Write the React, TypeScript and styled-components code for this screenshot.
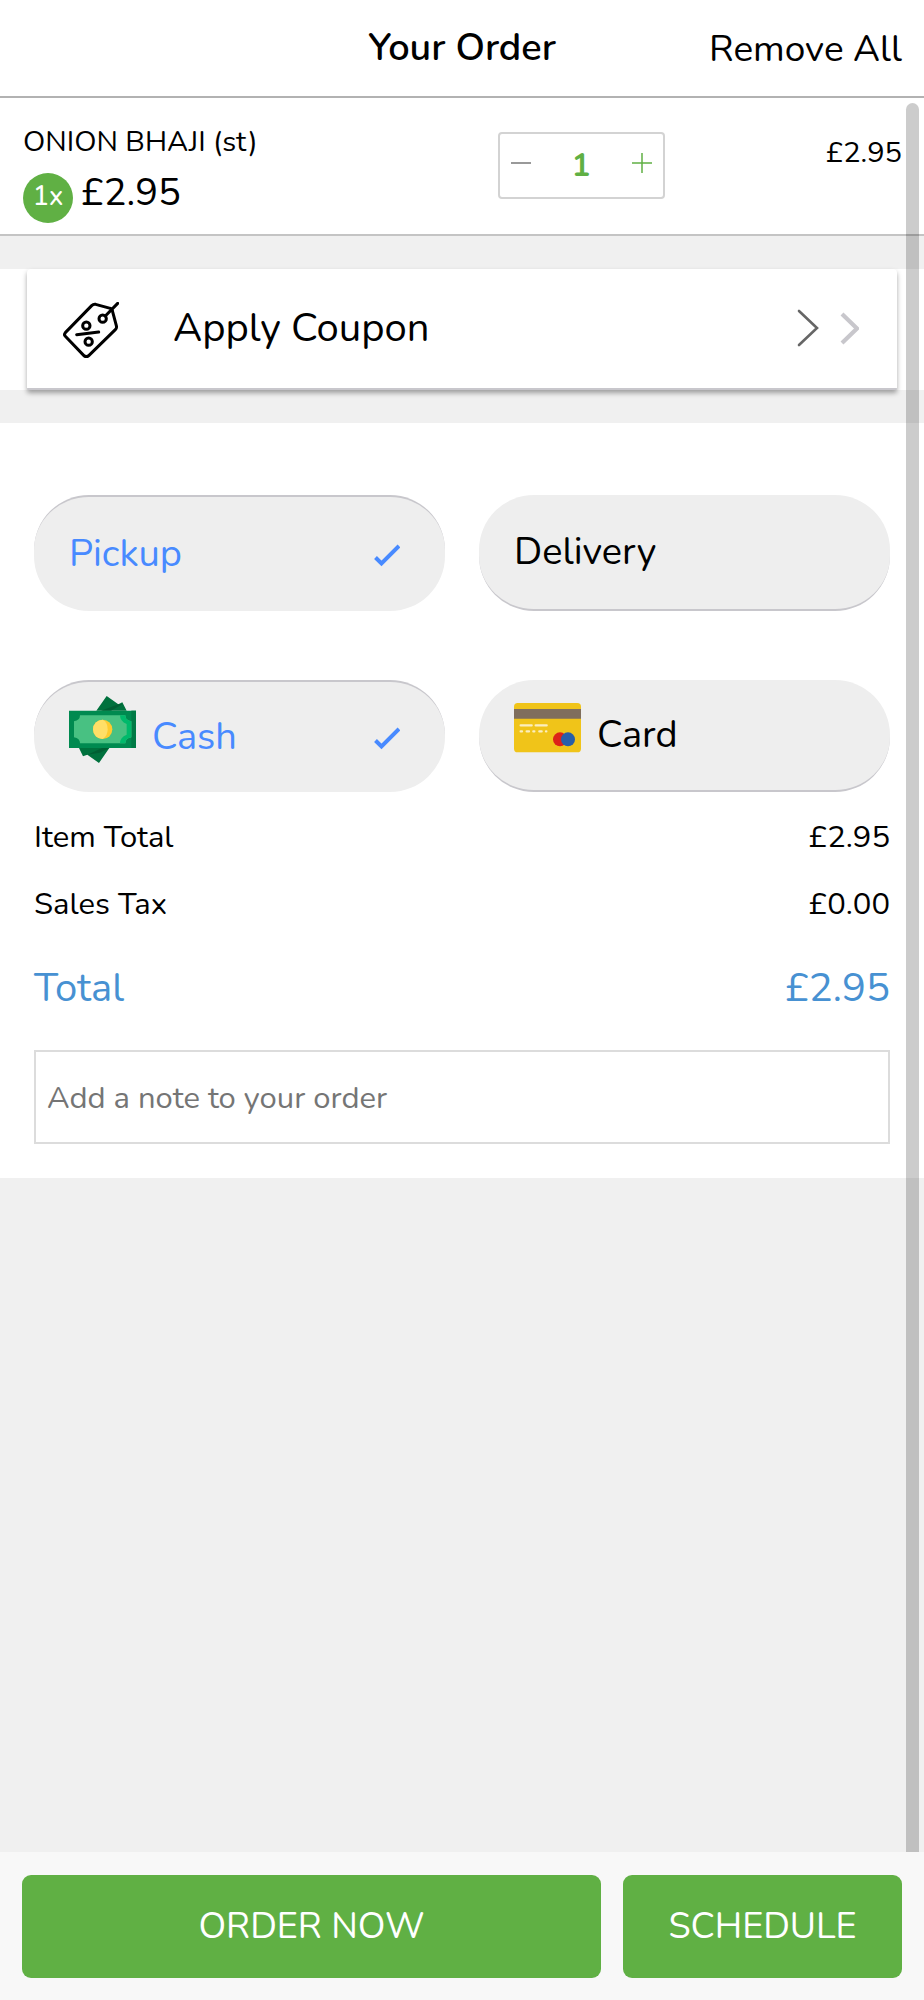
import React, { useState } from "react";
import styled, { createGlobalStyle } from "styled-components";

const GlobalStyle = createGlobalStyle`
  *, *::before, *::after { box-sizing: border-box; }
  body {
    margin: 0;
    background: #f0f0f0;
    color: #000;
    font-family: Nunito, Lato, "Open Sans", sans-serif;
    font-size: 29px;
  }
  button, input {
    font: inherit;
    color: inherit;
    margin: 0;
  }
`;

const green = "#60b044";
const blue = "#488aff";

const Page = styled.div`
  position: relative;
  display: flex;
  flex-direction: column;
  min-height: 100vh;
`;

const Header = styled.header`
  display: grid;
  grid-template-columns: 1fr auto 1fr;
  align-items: center;
  height: 98px;
  padding: 0 22px;
  background: #fff;
  border-bottom: 2px solid #b2b2b2;
`;

const Title = styled.h1`
  grid-column: 2;
  margin: 0;
  font-size: 38px;
  line-height: 48px;
  font-weight: 600;
`;

const PlainButton = styled.button`
  padding: 0;
  border: 0;
  background: none;
  cursor: pointer;
`;

const RemoveAll = styled(PlainButton)`
  justify-self: end;
  padding-top: 2px;
  font-size: 37px;
  line-height: 48px;
`;

const Scroller = styled.main`
  position: relative;
  flex: 1;
`;

const ScrollThumb = styled.div`
  position: absolute;
  top: 5px;
  right: 5px;
  bottom: 0;
  width: 13px;
  border-radius: 7px 7px 0 0;
  background: rgba(0, 0, 0, 0.2);
  pointer-events: none;
`;

const Item = styled.section`
  display: grid;
  grid-template-columns: 2fr 167px 1fr;
  align-items: start;
  height: 138px;
  padding: 26px 22px 0 23px;
  background: #fff;
  border-bottom: 2px solid #c4c4c4;
`;

const ItemName = styled.h2`
  margin: 0;
  font-size: 29px;
  line-height: 36px;
  font-weight: 400;
`;

const ItemPrice = styled.div`
  display: flex;
  gap: 8px;
  margin-top: 13px;
  font-size: 38px;
  line-height: 40px;
`;

const Badge = styled.span`
  width: 50px;
  height: 50px;
  border-radius: 50%;
  background: ${green};
  color: #fff;
  font-size: 27px;
  font-weight: 500;
  line-height: 48px;
  text-align: center;
`;

const Stepper = styled.div`
  display: grid;
  grid-template-columns: 42px 1fr 42px;
  align-items: start;
  height: 67px;
  margin-top: 8px;
  border: 2px solid #d3d3d3;
  border-radius: 4px;
`;

const StepButton = styled(PlainButton)<{ $color: string }>`
  display: flex;
  align-items: center;
  justify-content: center;
  height: 58px;
  color: ${(p) => p.$color};
`;

const Quantity = styled.output`
  color: ${green};
  font-size: 31px;
  font-weight: 700;
  line-height: 64px;
  text-align: center;
`;

const LinePrice = styled.div`
  padding-top: 9px;
  line-height: 40px;
  text-align: right;
`;

const CouponBand = styled.section`
  margin: 33px 0;
  padding: 0 27px;
  background: #fff;
`;

const Coupon = styled(PlainButton)`
  display: flex;
  align-items: center;
  width: 100%;
  height: 121px;
  padding: 0 38px 2px 36px;
  border-bottom: 2px solid #c8c7cc;
  border-radius: 4px 4px 2px 2px;
  background: #fff;
  box-shadow: 0 3px 5px rgba(0, 0, 0, 0.35);
`;

const CouponLabel = styled.span`
  flex: 1;
  padding-left: 54px;
  font-size: 40px;
  line-height: 50px;
  text-align: left;
`;

const CouponSvg = styled.svg`
  width: 56px;
  height: 56px;
  margin-top: 4px;
`;

const Checkout = styled.section`
  padding: 72px 34px 34px;
  background: #fff;
`;

const Choices = styled.fieldset<{ $height: number }>`
  display: grid;
  grid-template-columns: 1fr 1fr;
  gap: 34px;
  height: ${(p) => p.$height}px;
  margin: 0;
  padding: 0;
  border: 0;

  & + & {
    margin-top: 69px;
  }
`;

const Pill = styled.label<{ $on: boolean }>`
  display: flex;
  align-items: center;
  gap: 16px;
  padding: 0 45px 0 35px;
  border-radius: 55px;
  border-style: solid;
  border-color: #c8c7cc;
  border-width: ${(p) => (p.$on ? "2px 0 0" : "0 0 2px")};
  background: #eee;
  color: ${(p) => (p.$on ? blue : "#000")};
  font-size: 38px;
  line-height: 48px;
  cursor: pointer;
`;

const PillText = styled.span`
  flex: 1;
`;

const PillIcon = styled.svg`
  width: 67px;
  height: 67px;
  margin-bottom: 16px;
`;

const HiddenRadio = styled.input`
  position: absolute;
  width: 1px;
  height: 1px;
  opacity: 0;
`;

const Totals = styled.dl`
  margin: 11px 0 0;
`;

const TotalRow = styled.div<{ $grand?: boolean }>`
  display: flex;
  align-items: center;
  justify-content: space-between;
  height: ${(p) => (p.$grand ? 102 : 67)}px;
  color: ${(p) => (p.$grand ? "#4791d2" : "inherit")};
  font-size: ${(p) => (p.$grand ? 40 : 31)}px;

  dd {
    margin: 0;
  }
`;

const Note = styled.input`
  display: block;
  width: 100%;
  height: 94px;
  margin-top: 11px;
  padding: 2px 11px 0;
  border: 2px solid #dcdcdc;
  border-radius: 0;
  background: #fff;
  font-size: 31px;

  &::placeholder {
    color: #757575;
    opacity: 1;
  }
`;

const Footer = styled.footer`
  display: grid;
  grid-template-columns: 579fr 279fr;
  gap: 22px;
  padding: 23px 22px 22px;
  background: #f8f8f8;
`;

const Action = styled.button`
  height: 103px;
  border: 0;
  border-radius: 9px;
  background: ${green};
  color: #fff;
  font-size: 36px;
  cursor: pointer;
`;

const TagIcon = () => (
  <CouponSvg viewBox="0 0 168 168" fill="none" stroke="#000" strokeWidth="9" strokeLinecap="round" strokeLinejoin="round" aria-hidden="true">
    <path d="M7 92 86 11q5-5 12-4l44 12q5 1 6 7l12 45q2 7-3 12l-79 77q-8 8-16 0L7 103q-5-5 0-11Z" />
    <circle cx="119" cy="50" r="11" />
    <path d="m127 42 37-38M41 98l66-8" />
    <circle cx="70" cy="71" r="11" />
    <circle cx="77" cy="119" r="11" />
  </CouponSvg>
);

const Chevrons = () => (
  <svg width="62" height="38" viewBox="0 0 62 38" fill="none" aria-hidden="true">
    <path d="m2 2 18 17L2 36" stroke="#666" strokeWidth="2.6" strokeLinecap="round" />
    <path d="m45 5 15 14.500-15 14.500" stroke="#c8c7cc" strokeWidth="4.200" />
  </svg>
);

const Check = () => (
  <svg width="26" height="26" viewBox="0 0 26 26" fill="none" stroke={blue} strokeWidth="4" aria-hidden="true">
    <path d="m1.500 16.500 6 6L25 5" />
  </svg>
);

const CashIcon = () => (
  <PillIcon viewBox="0 0 201 201" aria-hidden="true">
    <path d="m82 44 31-44 35 25 12-6 13 25ZM30 156l12 25 13-5 35 25 31-45Z" fill="#00713d" />
    <path d="m96 44 52-19 12 0-34 19ZM55 176l44-20h22l-28 14Z" fill="#005f33" />
    <path d="M0 44h201v112H0z" fill="#008a50" />
    <path d="M187 44h14v112h-14z" fill="#007a45" />
    <path d="M33 58h136q0 15 18 18v48q-18 3-18 18H33q0-15-18-18V76q18-3 18-18Z" fill="#48c182" />
    <path d="M153 58h16q0 15 18 18v48q-18 3-18 18h-16q0-18 20-26V84q-20-8-20-26Z" fill="#00b96b" />
    <circle cx="101" cy="100" r="29" fill="#fecb2f" />
    <path d="M101 71a29 29 0 0 0 0 58q15-8 15-29t-15-29Z" fill="#ffdf67" />
  </PillIcon>
);

const CardIcon = () => (
  <PillIcon viewBox="0 0 201 201" aria-hidden="true">
    <rect y="27" width="201" height="148" rx="11" fill="#f0c419" />
    <path d="M0 45h201v29H0z" fill="#7f6e5d" />
    <path d="M20 94h33M65 94h33" stroke="#fbeebf" strokeWidth="7" strokeLinecap="round" />
    <path d="M20 112h4M38 112h7M58 112h3M76 112h7M96 112h1" stroke="#fbeebf" strokeWidth="7" strokeLinecap="round" />
    <circle cx="138" cy="136" r="21" fill="#dc2318" />
    <circle cx="162" cy="136" r="21" fill="#285ea8" />
  </PillIcon>
);

interface OptionProps {
  group: string;
  label: string;
  value: string;
  onSelect: (label: string) => void;
  icon?: React.ReactNode;
}

const Option = ({ group, label, value, onSelect, icon }: OptionProps) => {
  const on = label === value;
  return (
    <Pill $on={on}>
      <HiddenRadio type="radio" name={group} checked={on} onChange={() => onSelect(label)} />
      {icon}
      <PillText>{label}</PillText>
      {on && <Check />}
    </Pill>
  );
};

const money = (n: number) => `£${n.toFixed(2)}`;

export default function App() {
  const [quantity, setQuantity] = useState(1);
  const [method, setMethod] = useState("Pickup");
  const [payment, setPayment] = useState("Cash");
  const price = 2.95;
  const total = price * quantity;

  return (
    <Page>
      <GlobalStyle />
      <Header>
        <Title>Your Order</Title>
        <RemoveAll type="button">Remove All</RemoveAll>
      </Header>
      <Scroller>
        <Item>
          <div>
            <ItemName>ONION BHAJI (st)</ItemName>
            <ItemPrice>
              <Badge>{quantity}x</Badge>
              {money(price)}
            </ItemPrice>
          </div>
          <Stepper>
            <StepButton type="button" $color="#777" aria-label="Decrease quantity" onClick={() => setQuantity(Math.max(1, quantity - 1))}>
              <svg width="20" height="20" viewBox="0 0 20 20" stroke="currentColor" strokeWidth="1.500" aria-hidden="true">
                <path d="M0 10h20" />
              </svg>
            </StepButton>
            <Quantity>{quantity}</Quantity>
            <StepButton type="button" $color={green} aria-label="Increase quantity" onClick={() => setQuantity(quantity + 1)}>
              <svg width="20" height="20" viewBox="0 0 20 20" stroke="currentColor" strokeWidth="1.500" aria-hidden="true">
                <path d="M0 10h20M10 0v20" />
              </svg>
            </StepButton>
          </Stepper>
          <LinePrice>{money(total)}</LinePrice>
        </Item>
        <CouponBand>
          <Coupon type="button">
            <TagIcon />
            <CouponLabel>Apply Coupon</CouponLabel>
            <Chevrons />
          </Coupon>
        </CouponBand>
        <Checkout>
          <Choices $height={116} aria-label="Order method">
            <Option group="method" label="Pickup" value={method} onSelect={setMethod} />
            <Option group="method" label="Delivery" value={method} onSelect={setMethod} />
          </Choices>
          <Choices $height={112} aria-label="Payment">
            <Option group="payment" label="Cash" value={payment} onSelect={setPayment} icon={<CashIcon />} />
            <Option group="payment" label="Card" value={payment} onSelect={setPayment} icon={<CardIcon />} />
          </Choices>
          <Totals>
            <TotalRow>
              <dt>Item Total</dt>
              <dd>{money(total)}</dd>
            </TotalRow>
            <TotalRow>
              <dt>Sales Tax</dt>
              <dd>{money(0)}</dd>
            </TotalRow>
            <TotalRow $grand>
              <dt>Total</dt>
              <dd>{money(total)}</dd>
            </TotalRow>
          </Totals>
          <Note type="text" placeholder="Add a note to your order" aria-label="Order note" />
        </Checkout>
        <ScrollThumb />
      </Scroller>
      <Footer>
        <Action type="button">ORDER NOW</Action>
        <Action type="button">SCHEDULE</Action>
      </Footer>
    </Page>
  );
}
